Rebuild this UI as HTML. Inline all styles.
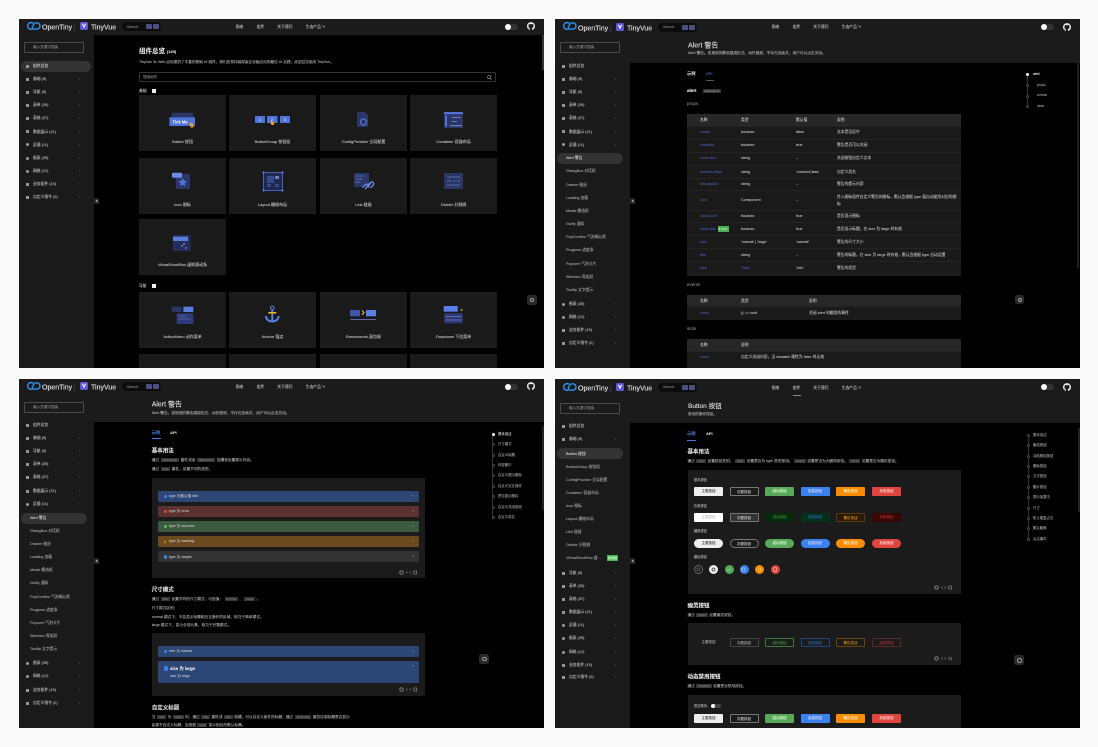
<!DOCTYPE html>
<html><head><meta charset="utf-8"><style>
html,body{margin:0;padding:0;background:#fafafa}
body{width:1098px;height:747px;overflow:hidden;position:relative;font-family:"Liberation Sans","Noto Sans CJK SC",sans-serif}
.f{position:absolute;width:525px;height:349px;background:#000;overflow:hidden;filter:blur(.35px)}
p{position:absolute;margin:0;line-height:0;white-space:nowrap;font-size:3.8px;color:#c4c4c4;-webkit-text-stroke:.07px currentColor}
i{position:absolute;display:block;font-style:normal;-webkit-text-stroke:.07px currentColor}
svg{position:absolute;overflow:visible}
.lg{transform:translateY(2.3px)}
.hd{left:0;top:0;width:525px;height:16px;background:#1b1b1b}
.sub{left:0;top:16px;width:525px;height:28px;background:#1b1b1b}
.sb{left:0;top:0;width:75px;height:349px;background:#1a1a1a}
.sch{left:5px;top:23px;width:58px;height:9px;border:.5px solid #4a4a4a;border-radius:1.5px}
.n{left:14px}
.n:before{content:"";position:absolute;left:-6.6px;top:-1.5px;width:3px;height:3px;background:#999;border-radius:.5px}
.o:before{border-radius:50%}
.n.a:after{content:"›";position:absolute;left:46px;top:0;color:#666;font-size:4px}
.u{left:11px;color:#a8a8a8}
.pill{background:#333;border-radius:6px;height:10.5px}
.cd{background:#1a1a1a;width:87px;height:56px}
.cl{color:#ccc;font-size:4px;transform:translateX(-50%)}
.ttl{font-size:7px;color:#e8e8e8;transform:translateY(1.7px)}
.sec{font-size:5.5px;color:#e8e8e8;font-weight:bold;left:132.7px;transform:translateY(.7px)}
.tx{left:132.7px;color:#b4b4b4;font-size:3.7px}
.k{background:#383838;color:#777;font-size:3px;padding:0 2px;margin:0 1.5px;border-radius:.5px}
.tr{left:132px;width:274px;background:#1a1a1a;border-top:.5px solid #242424}
.th{left:132px;width:274px;background:#272727}
.b{color:#4a5ab0;left:145px}
.c2{left:186px;color:#c4c4c4}
.c3{left:241px;color:#c4c4c4}
.c4{left:282px;color:#c4c4c4}
.box{background:#1b1b1b;border-radius:1px}
.al{left:139px;width:261px;height:11px;border-radius:1.5px}
.fb{width:9.5px;height:9.5px;background:#2a2a2a;border-radius:2.5px}
.fb:after{content:"";position:absolute;left:3px;top:3px;width:2.4px;height:2.4px;border:.6px solid #999;border-radius:50%}
.hn{width:5px;height:6px;background:#262626;border-radius:1px}
.hn:after{content:"";position:absolute;left:1.8px;top:2px;width:1.2px;height:1.2px;border-left:.5px solid #aaa;border-bottom:.5px solid #aaa;transform:rotate(45deg)}
.sc{background:#2a2a2a;width:2px}
.toc{font-size:3.4px;color:#a4a4a4}
.dt{width:1px;height:1px;border:.3px solid #444;border-radius:50%;background:#000}
.bt{width:29px;height:9px;border-radius:1px;font-size:3.5px;line-height:9px;text-align:center;box-sizing:border-box}
.ln{color:#b4b4b4;font-size:3.2px}
.w{background:#eee;color:#333}.s{border:.5px solid #777;color:#ccc}.gr{background:#5aa85a;color:#dfd}.bl{background:#3b82f0;color:#dde}.or{background:#fb8c00;color:#fed}.re{background:#e0443e;color:#fdd}
.r{border-radius:5px}
.cc{width:9px;height:9px;border-radius:50%}
.logo path{fill:none;stroke-width:1.3;stroke:#2f9cff}
</style></head><body>

<!-- FRAME 1 -->
<div class="f" style="left:19px;top:19px">
<i class="sb"></i><i class="hd"></i>
<svg class="logo" style="left:8px;top:3px" width="14" height="8" viewBox="0 0 14 8"><path d="M6.3 1.4A3.4 3.4 0 1 0 6.6 6.2"/><path d="M6.6 6.6C8 7.7 13 7.5 13 4S8.8.2 7.4 1.6 5.5 5 5 6"/></svg>
<p class="lg" style="left:23px;top:7px;font-size:7px;color:#eee">OpenTiny</p><p class="lg" style="left:55px;top:7px;font-size:6px;color:#555">|</p>
<svg style="left:61px;top:3px" width="8" height="8" viewBox="0 0 8 8"><rect width="8" height="8" rx="1.6" fill="#5e56d8"/><path d="M1.8 1.8L4 6.4 6.2 1.8H5L4 4 3 1.8z" fill="#fff"/></svg>
<p class="lg" style="left:72px;top:7px;font-size:7px;color:#eee">TinyVue</p>
<i style="left:103px;top:3px;width:39px;height:9px;background:#0c0c0c;border-radius:5px"></i>
<p style="left:108px;top:7.5px;font-size:3.6px;color:#888">Search</p>
<i style="left:127px;top:5px;width:5.5px;height:5px;background:#4b5080;border-radius:.8px"></i><i style="left:133.5px;top:5px;width:6.5px;height:5px;background:#4b5080;border-radius:.8px"></i>
<p style="left:216.7px;top:8px">指南</p><p style="left:237.7px;top:8px">组件</p><p style="left:258.3px;top:8px">关于我们</p><p style="left:286.7px;top:8px">生态产品 ∨</p>
<i style="left:486px;top:4.5px;width:13px;height:6px;background:#333;border-radius:3px"></i><i style="left:486px;top:4.5px;width:6px;height:6px;background:#fff;border-radius:50%"></i>
<svg style="left:508px;top:3px" width="8" height="8" viewBox="0 0 24 24"><path fill="#eee" d="M12 .5C5.37.5 0 5.87 0 12.5c0 5.3 3.438 9.8 8.205 11.385.6.11.82-.26.82-.577v-2.234c-3.338.726-4.033-1.415-4.033-1.415-.546-1.387-1.333-1.756-1.333-1.756-1.089-.745.083-.729.083-.729 1.205.084 1.84 1.237 1.84 1.237 1.07 1.834 2.807 1.304 3.492.997.108-.775.418-1.305.762-1.605-2.665-.305-5.467-1.334-5.467-5.93 0-1.31.468-2.38 1.236-3.22-.124-.303-.536-1.524.117-3.176 0 0 1.008-.322 3.3 1.23a11.5 11.5 0 0 1 6.003 0c2.29-1.552 3.297-1.23 3.297-1.23.655 1.652.243 2.873.119 3.176.77.84 1.235 1.91 1.235 3.22 0 4.61-2.807 5.62-5.48 5.92.43.37.815 1.102.815 2.222v3.293c0 .32.217.694.825.576C20.565 22.296 24 17.8 24 12.5 24 5.87 18.63.5 12 .5z"/></svg>
<i class="sch"></i><p style="left:14px;top:28px;color:#888;font-size:3.6px">输入关键字搜索</p>
<i class="pill" style="left:2px;top:42px;width:70px"></i>
<p class="n" style="top:47px;color:#ddd">组件总览</p><p class="n a" style="top:60px">基础 (9)</p><p class="n a" style="top:73px">导航 (9)</p><p class="n a" style="top:86px">表单 (26)</p><p class="n a" style="top:99px">表格 (37)</p><p class="n a" style="top:112.5px">数据展示 (21)</p><p class="n a o" style="top:125.5px">反馈 (11)</p><p class="n a o" style="top:139px">图表 (28)</p><p class="n a o" style="top:152px">网格 (12)</p><p class="n a" style="top:165px">业务组件 (15)</p><p class="n a" style="top:178px">自定义指令 (2)</p>
<i class="hn" style="left:75px;top:179px"></i>
<p style="left:120px;top:33px;font-size:6.5px;font-weight:bold;color:#e8e8e8">组件总览 <span style="font-size:4px">(129)</span></p>
<p style="left:120px;top:43px;font-size:3.65px;color:#b4b4b4">TinyVue 3x Web 应用提供了丰富的基础 UI 组件，我们还将持续探索企业级应用的最佳 UI 实践，欢迎尝试使用 TinyVue。</p>
<i style="left:120px;top:53px;width:357px;height:10px;box-sizing:border-box;border:.5px solid #333;border-radius:1px"></i>
<p style="left:124px;top:58px;font-size:3.6px;color:#888">搜索组件</p>
<svg style="left:468px;top:55.5px" width="5" height="5" viewBox="0 0 5 5"><circle cx="2.2" cy="2.2" r="1.6" fill="none" stroke="#aaa" stroke-width=".6"/><path d="M3.4 3.4L4.6 4.6" stroke="#aaa" stroke-width=".6"/></svg>
<p style="left:120px;top:72px;color:#ccc">基础</p><i style="left:133px;top:70.3px;width:3.6px;height:3.6px;background:#eee"></i>
<p style="left:120px;top:267px;color:#ccc">导航</p><i style="left:133px;top:265.3px;width:3.6px;height:3.6px;background:#eee"></i>
<i class="cd" style="left:120px;top:76px"></i><i class="cd" style="left:210px;top:76px"></i><i class="cd" style="left:301px;top:76px"></i><i class="cd" style="left:391px;top:76px"></i>
<i class="cd" style="left:120px;top:139px"></i><i class="cd" style="left:210px;top:139px"></i><i class="cd" style="left:301px;top:139px"></i><i class="cd" style="left:391px;top:139px"></i>
<i class="cd" style="left:120px;top:200px"></i>
<i class="cd" style="left:120px;top:273px"></i><i class="cd" style="left:210px;top:273px"></i><i class="cd" style="left:301px;top:273px"></i><i class="cd" style="left:391px;top:273px"></i>
<i class="cd" style="left:120px;top:335px"></i><i class="cd" style="left:210px;top:335px"></i><i class="cd" style="left:301px;top:335px"></i><i class="cd" style="left:391px;top:335px"></i>
<p class="cl" style="left:163.5px;top:122.7px">Button 按钮</p><p class="cl" style="left:253.5px;top:122.7px">ButtonGroup 按钮组</p><p class="cl" style="left:344.5px;top:122.7px">ConfigProvider 全局配置</p><p class="cl" style="left:434.5px;top:122.7px">Container 容器布局</p>
<p class="cl" style="left:163.5px;top:185.5px">Icon 图标</p><p class="cl" style="left:253.5px;top:185.5px">Layout 栅格布局</p><p class="cl" style="left:344.5px;top:185.5px">Link 链接</p><p class="cl" style="left:434.5px;top:185.5px">Divider 分割线</p>
<p class="cl" style="left:163.5px;top:245.5px">VirtualScrollBox 虚拟滚动条</p>
<p class="cl" style="left:163.5px;top:318.3px">ActionMenu 动作菜单</p><p class="cl" style="left:253.5px;top:318.3px">Anchor 锚点</p><p class="cl" style="left:344.5px;top:318.3px">Breadcrumb 面包屑</p><p class="cl" style="left:434.5px;top:318.3px">Dropdown 下拉菜单</p>
<svg style="left:0;top:0" width="525" height="349" viewBox="0 0 525 349">
<rect x="152.7" y="93.7" width="21.6" height="6" fill="#2b3566"/><rect x="150.3" y="98.3" width="25.7" height="8.7" fill="#4f74d9"/><text x="161" y="104.4" font-size="4.2" font-weight="bold" fill="#fff" text-anchor="middle" font-family="Liberation Sans">Tick Me</text><path d="M170 104.5c2-1.5 4-.5 4.5 2v2h-3v-2z" fill="#e8a020"/>
<rect x="236" y="97" width="10" height="7" fill="#4f74d9"/><rect x="248" y="97" width="10.5" height="7" fill="#4f74d9"/><rect x="261" y="97" width="10" height="7" fill="#4f74d9"/><text x="241" y="102" font-size="4" fill="#fff" text-anchor="middle" font-family="Liberation Sans">1</text><text x="253" y="102" font-size="4" fill="#fff" text-anchor="middle" font-family="Liberation Sans">2</text><text x="266" y="102" font-size="4" fill="#fff" text-anchor="middle" font-family="Liberation Sans">3</text><path d="M251 103c1.6-1.400 3.500-.8 4 1.200v1.800h-2.500z" fill="#e8a020"/>
<path d="M338 93h8l3 3v12h-11z" fill="#2b3566"/><circle cx="344.5" cy="103" r="3" fill="none" stroke="#4f74d9" stroke-width="1.3"/>
<rect x="425" y="93" width="19" height="16" fill="#2b3566"/><rect x="425" y="93" width="19" height="2.2" fill="#4f74d9"/><rect x="426" y="96.5" width="2" height="11" fill="#4f74d9"/><rect x="433" y="98" width="9" height="1" fill="#6a7fc0"/><rect x="433" y="102" width="5" height="1" fill="#6a7fc0"/><rect x="431" y="106" width="12" height="1.2" fill="#6a7fc0"/>
<rect x="156.7" y="155" width="14.3" height="15" rx="1" fill="#2b3566"/><rect x="153" y="153.7" width="10" height="5" rx=".8" fill="#6a8ce8"/><path d="M163.7 159l1.4 2.7 3 .4-2.2 2.1.5 3-2.7-1.4-2.700 1.400.5-3-2.200-2.100 3-.4z" fill="#4f74d9"/>
<rect x="244.5" y="153.5" width="19" height="18" fill="#1f2850" stroke="#4f74d9" stroke-width=".8"/><rect x="248" y="157" width="7" height="7" fill="#3a4a86"/><rect x="256" y="157" width="4" height="3" fill="#6a7fc0"/><rect x="248" y="165" width="4" height="3" fill="#3a4a86"/><rect x="256" y="165" width="4" height="3" fill="#3a4a86"/><circle cx="244.5" cy="153.5" r="1" fill="#6a8ce8"/><circle cx="263.5" cy="153.5" r="1" fill="#6a8ce8"/><circle cx="244.5" cy="171.5" r="1" fill="#6a8ce8"/><circle cx="263.5" cy="171.5" r="1" fill="#6a8ce8"/>
<rect x="335" y="154" width="15" height="14" fill="#2b3566"/><path d="M336.5 157h9M336.5 160h7M336.5 163h5" stroke="#6a7fc0" stroke-width=".8"/><path d="M346 170l6-6M343.5 168.500l3-3a2.200 2.200 0 0 1 3 3M349 166l3-3a2 2 0 0 1 2.500 2.800l-3 3" fill="none" stroke="#6a8ce8" stroke-width="1.3"/>
<rect x="425" y="154" width="19" height="16" fill="#2b3566"/><path d="M428 158h13M428 162h4M434 162h2M438 162h3M428 166h13" stroke="#6a7fc0" stroke-width=".8"/>
<rect x="154" y="216" width="17.7" height="16" fill="#242d5c"/><rect x="154" y="217.7" width="15" height="4.3" fill="#5a7de0"/><circle cx="163" cy="227" r="1" fill="#6a7fc0"/><circle cx="167" cy="229" r="1" fill="#6a7fc0"/><circle cx="165" cy="225" r="1" fill="#6a7fc0"/>
<rect x="152.7" y="287.7" width="10" height="5.3" fill="#2b3566"/><rect x="164.3" y="287.7" width="10" height="5.3" fill="#5a7de0"/><rect x="157.7" y="294.3" width="16.6" height="10.7" fill="#2f3a78"/><path d="M159.5 297h8M159.5 300h12" stroke="#5a6cb0" stroke-width=".7"/>
<circle cx="253.3" cy="289" r="1.8" fill="none" stroke="#5a7de0" stroke-width="1.1"/><path d="M253.3 291v11M247 297c0 3.500 3 5.500 6.300 5.500s6.300-2 6.300-5.500" fill="none" stroke="#5a7de0" stroke-width="2"/><rect x="249.3" y="293" width="8" height="1.5" fill="#e8c020"/>
<rect x="331" y="291" width="10" height="6.3" fill="#3e55a8"/><path d="M343 291.5l2 2.200-2 2.200" fill="none" stroke="#e8c020" stroke-width="1.1"/><rect x="347" y="291" width="10" height="6.3" fill="#5a80e8"/><rect x="331.5" y="300" width="25.5" height="1" fill="#5a6cb0"/>
<rect x="424.7" y="287" width="14" height="5.7" fill="#5a80e8"/><path d="M441 291.5l1.500-1.800 1.500 1.800z" fill="#e8c020"/><rect x="425.3" y="294.3" width="18.4" height="10" fill="#2f3a78"/><path d="M426.5 297.500h16M426.5 301h16" stroke="#5a6cb0" stroke-width=".9"/>
</svg>
<i class="sc" style="left:522.7px;top:16px;height:35px;background:#333"></i>
<i class="fb" style="left:508px;top:276px"></i>
</div>

<!-- FRAME 2 -->
<div class="f" style="left:555px;top:19px">
<i class="sb"></i><i class="hd"></i><i class="sub"></i>
<svg class="logo" style="left:8px;top:3px" width="14" height="8" viewBox="0 0 14 8"><path d="M6.3 1.4A3.4 3.4 0 1 0 6.6 6.2"/><path d="M6.6 6.6C8 7.7 13 7.5 13 4S8.8.2 7.4 1.6 5.5 5 5 6"/></svg>
<p class="lg" style="left:23px;top:7.5px;font-size:7px;color:#eee">OpenTiny</p><p class="lg" style="left:55px;top:7.5px;font-size:6px;color:#555">|</p>
<svg style="left:61px;top:3.5px" width="8" height="8" viewBox="0 0 8 8"><rect width="8" height="8" rx="1.6" fill="#5e56d8"/><path d="M1.8 1.8L4 6.4 6.2 1.8H5L4 4 3 1.8z" fill="#fff"/></svg>
<p class="lg" style="left:72px;top:7.5px;font-size:7px;color:#eee">TinyVue</p>
<i style="left:103px;top:3.5px;width:39px;height:9px;background:#0c0c0c;border-radius:5px"></i>
<p style="left:108px;top:8px;font-size:3.6px;color:#888">Search</p>
<i style="left:127px;top:5.5px;width:5.5px;height:5px;background:#4b5080;border-radius:.8px"></i><i style="left:133.5px;top:5.5px;width:6.5px;height:5px;background:#4b5080;border-radius:.8px"></i>
<p style="left:216.7px;top:8px">指南</p><p style="left:237.7px;top:8px">组件</p><p style="left:258.3px;top:8px">关于我们</p><p style="left:286.7px;top:8px">生态产品 ∨</p>
<i style="left:486px;top:5px;width:13px;height:6px;background:#333;border-radius:3px"></i><i style="left:486px;top:5px;width:6px;height:6px;background:#fff;border-radius:50%"></i>
<svg style="left:508px;top:3.5px" width="8" height="8" viewBox="0 0 24 24"><path fill="#eee" d="M12 .5C5.37.5 0 5.87 0 12.5c0 5.3 3.438 9.8 8.205 11.385.6.11.82-.26.82-.577v-2.234c-3.338.726-4.033-1.415-4.033-1.415-.546-1.387-1.333-1.756-1.333-1.756-1.089-.745.083-.729.083-.729 1.205.084 1.84 1.237 1.84 1.237 1.07 1.834 2.807 1.304 3.492.997.108-.775.418-1.305.762-1.605-2.665-.305-5.467-1.334-5.467-5.93 0-1.31.468-2.38 1.236-3.22-.124-.303-.536-1.524.117-3.176 0 0 1.008-.322 3.3 1.23a11.5 11.5 0 0 1 6.003 0c2.29-1.552 3.297-1.23 3.297-1.23.655 1.652.243 2.873.119 3.176.77.84 1.235 1.91 1.235 3.22 0 4.61-2.807 5.62-5.48 5.92.43.37.815 1.102.815 2.222v3.293c0 .32.217.694.825.576C20.565 22.296 24 17.8 24 12.5 24 5.87 18.63.5 12 .5z"/></svg>
<i class="sch"></i><p style="left:14px;top:28px;color:#888;font-size:3.6px">输入关键字搜索</p>
<p class="n" style="top:47px">组件总览</p><p class="n a" style="top:60px">基础 (9)</p><p class="n a" style="top:73px">导航 (9)</p><p class="n a" style="top:86px">表单 (26)</p><p class="n a" style="top:99px">表格 (37)</p><p class="n a" style="top:112.5px">数据展示 (21)</p><p class="n a o" style="top:125.5px">反馈 (11)</p>
<i class="pill" style="left:2px;top:134px;width:66px"></i>
<p class="u" style="top:139px;color:#ddd">Alert 警告</p><p class="u" style="top:152px">DialogBox 对话框</p><p class="u" style="top:165.7px">Drawer 抽屉</p><p class="u" style="top:179px">Loading 加载</p><p class="u" style="top:192px">Modal 模态框</p><p class="u" style="top:205px">Notify 通知</p><p class="u" style="top:218px">PopConfirm 气泡确认框</p><p class="u" style="top:231px">Progress 进度条</p><p class="u" style="top:245px">Popover 气泡卡片</p><p class="u" style="top:258px">Skeleton 骨架屏</p><p class="u" style="top:271px">Tooltip 文字提示</p>
<p class="n a o" style="top:285px">图表 (28)</p><p class="n a o" style="top:298px">网格 (12)</p><p class="n a" style="top:311px">业务组件 (15)</p><p class="n a" style="top:324px">自定义指令 (2)</p>
<i class="hn" style="left:75px;top:179px"></i>
<p class="ttl" style="left:133px;top:26px">Alert 警告</p>
<p style="left:133px;top:34px;font-size:3.7px;color:#b4b4b4">Alert 警告。表现现的静态展现形式、动作展现、不存在连续关、用户可以点击关闭。</p>
<p style="left:132px;top:54.7px;font-size:4.2px;font-weight:bold;color:#ddd">示例</p><p style="left:151px;top:54.7px;font-size:4px;color:#4f74d9">API</p><i style="left:151px;top:60.5px;width:8px;height:.6px;background:#555"></i>
<p style="left:132px;top:72px;font-size:4.5px;font-weight:bold;color:#eee">alert</p><p style="left:148px;top:72px;font-size:3px;color:#999;background:#333;padding:0 1.5px;line-height:4px;height:4px;margin-top:-2px">component</p>
<p style="left:132px;top:85px;font-size:4.5px;color:#888">props</p>
<i class="th" style="top:95px;height:12px"></i>
<i class="tr" style="top:107px;height:13px"></i><i class="tr" style="top:120px;height:13px"></i><i class="tr" style="top:133px;height:13px"></i><i class="tr" style="top:146px;height:13px"></i><i class="tr" style="top:159px;height:12px"></i><i class="tr" style="top:171px;height:20px"></i><i class="tr" style="top:191px;height:12px"></i><i class="tr" style="top:203px;height:13px"></i><i class="tr" style="top:216px;height:13px"></i><i class="tr" style="top:229px;height:13px"></i><i class="tr" style="top:242px;height:14px"></i>
<p class="c2" style="left:145px;top:100.7px;color:#ccc">名称</p><p class="c2" style="top:100.7px;color:#ccc">类型</p><p class="c3" style="top:100.7px;color:#ccc">默认值</p><p class="c4" style="top:100.7px;color:#ccc">说明</p>
<p class="b" style="top:112.7px">center</p><p class="c2" style="top:112.7px">boolean</p><p class="c3" style="top:112.7px">false</p><p class="c4" style="top:112.7px">文本是否居中</p>
<p class="b" style="top:126px">closable</p><p class="c2" style="top:126px">boolean</p><p class="c3" style="top:126px">true</p><p class="c4" style="top:126px">警告是否可以关闭</p>
<p class="b" style="top:139px">close-text</p><p class="c2" style="top:139px">string</p><p class="c3" style="top:139px">--</p><p class="c4" style="top:139px">关闭按钮自定义文本</p>
<p class="b" style="top:152.5px">custom-class</p><p class="c2" style="top:152.5px">string</p><p class="c3" style="top:152.5px">'customClass'</p><p class="c4" style="top:152.5px">自定义类名</p>
<p class="b" style="top:165px">description</p><p class="c2" style="top:165px">string</p><p class="c3" style="top:165px">--</p><p class="c4" style="top:165px">警告的提示内容</p>
<p class="b" style="top:181px">icon</p><p class="c2" style="top:181px">Component</p><p class="c3" style="top:181px">--</p><p class="c4" style="top:177.5px">传入图标组件自定义警告的图标，默认会根据 type 值自动使用对应的图</p><p class="c4" style="top:184.5px">标</p>
<p class="b" style="top:196.7px">show-icon</p><p class="c2" style="top:196.7px">boolean</p><p class="c3" style="top:196.7px">true</p><p class="c4" style="top:196.7px">是否显示图标</p>
<p class="b" style="top:209.7px">show-title</p><i style="left:162.7px;top:207.3px;width:11.3px;height:5.5px;background:#4caf50"></i><p style="left:163.5px;top:210px;font-size:3px;color:#dfd">3.21.0</p><p class="c2" style="top:209.7px">boolean</p><p class="c3" style="top:209.7px">true</p><p class="c4" style="top:209.7px">是否显示标题，在 size 为 large 时有效</p>
<p class="b" style="top:222.7px">size</p><p class="c2" style="top:222.7px">'normal' | 'large'</p><p class="c3" style="top:222.7px">'normal'</p><p class="c4" style="top:222.7px">警告的尺寸大小</p>
<p class="b" style="top:236px">title</p><p class="c2" style="top:236px">string</p><p class="c3" style="top:236px">--</p><p class="c4" style="top:236px">警告的标题，在 size 为 large 时有效，默认会根据 type 自动设置</p>
<p class="b" style="top:249px">type</p><p class="c2" style="top:249px;color:#4a5ab0">IType</p><p class="c3" style="top:249px">'info'</p><p class="c4" style="top:249px">警告的类型</p>
<p style="left:132px;top:266px;font-size:4.5px;color:#888">events</p>
<i class="th" style="top:276px;height:11px"></i><i class="tr" style="top:287px;height:13px"></i>
<p style="left:145px;top:282px;color:#ccc">名称</p><p class="c2" style="top:282px;color:#ccc">类型</p><p style="left:254px;top:282px;color:#ccc">说明</p>
<p class="b" style="top:293.5px">close</p><p class="c2" style="top:293.5px">() => void</p><p style="left:254px;top:293.5px">关闭 alert 时触发的事件</p>
<p style="left:132px;top:310px;font-size:4.5px;color:#888">slots</p>
<i class="th" style="top:320px;height:12px"></i><i class="tr" style="top:332px;height:17px"></i>
<p style="left:145px;top:326px;color:#ccc">名称</p><p class="c2" style="top:326px;color:#ccc">说明</p>
<p class="b" style="top:338px">close</p><p class="c2" style="top:338px">自定义关闭内容，当 closable 属性为 false 时无效</p>
<i style="left:472px;top:56px;width:.4px;height:32px;background:#333"></i>
<i class="dt" style="left:471.3px;top:54px;background:#fff;border-color:#fff"></i><i class="dt" style="left:471.3px;top:65px"></i><i class="dt" style="left:471.3px;top:75.5px"></i><i class="dt" style="left:471.3px;top:85.5px"></i>
<p class="toc" style="left:478px;top:55px;color:#eee">alert</p><p class="toc" style="left:482px;top:66px">props</p><p class="toc" style="left:482px;top:76px">events</p><p class="toc" style="left:482px;top:86.5px">slots</p>
<i class="sc" style="left:522px;top:44px;height:205px;background:#1f1f1f"></i>
<i class="fb" style="left:459.5px;top:275.5px"></i>
</div>

<!-- FRAME 3 -->
<div class="f" style="left:19px;top:379px">
<i class="sb"></i><i class="hd"></i><i class="sub" style="height:27px"></i>
<svg class="logo" style="left:8px;top:3px" width="14" height="8" viewBox="0 0 14 8"><path d="M6.3 1.4A3.4 3.4 0 1 0 6.6 6.2"/><path d="M6.6 6.6C8 7.7 13 7.5 13 4S8.8.2 7.4 1.6 5.5 5 5 6"/></svg>
<p class="lg" style="left:23px;top:7px;font-size:7px;color:#eee">OpenTiny</p><p class="lg" style="left:55px;top:7px;font-size:6px;color:#555">|</p>
<svg style="left:61px;top:3px" width="8" height="8" viewBox="0 0 8 8"><rect width="8" height="8" rx="1.6" fill="#5e56d8"/><path d="M1.8 1.8L4 6.4 6.2 1.8H5L4 4 3 1.8z" fill="#fff"/></svg>
<p class="lg" style="left:72px;top:7px;font-size:7px;color:#eee">TinyVue</p>
<i style="left:103px;top:3px;width:39px;height:9px;background:#0c0c0c;border-radius:5px"></i>
<p style="left:108px;top:7.5px;font-size:3.6px;color:#888">Search</p>
<i style="left:127px;top:5px;width:5.5px;height:5px;background:#4b5080;border-radius:.8px"></i><i style="left:133.5px;top:5px;width:6.5px;height:5px;background:#4b5080;border-radius:.8px"></i>
<p style="left:216.7px;top:7.5px">指南</p><p style="left:237.7px;top:7.5px">组件</p><p style="left:258.3px;top:7.5px">关于我们</p><p style="left:286.7px;top:7.5px">生态产品 ∨</p>
<i style="left:486px;top:4.5px;width:13px;height:6px;background:#333;border-radius:3px"></i><i style="left:486px;top:4.5px;width:6px;height:6px;background:#fff;border-radius:50%"></i>
<svg style="left:508px;top:3px" width="8" height="8" viewBox="0 0 24 24"><path fill="#eee" d="M12 .5C5.37.5 0 5.87 0 12.5c0 5.3 3.438 9.8 8.205 11.385.6.11.82-.26.82-.577v-2.234c-3.338.726-4.033-1.415-4.033-1.415-.546-1.387-1.333-1.756-1.333-1.756-1.089-.745.083-.729.083-.729 1.205.084 1.84 1.237 1.84 1.237 1.07 1.834 2.807 1.304 3.492.997.108-.775.418-1.305.762-1.605-2.665-.305-5.467-1.334-5.467-5.93 0-1.31.468-2.38 1.236-3.22-.124-.303-.536-1.524.117-3.176 0 0 1.008-.322 3.3 1.23a11.5 11.5 0 0 1 6.003 0c2.29-1.552 3.297-1.23 3.297-1.23.655 1.652.243 2.873.119 3.176.77.84 1.235 1.91 1.235 3.22 0 4.61-2.807 5.62-5.48 5.92.43.37.815 1.102.815 2.222v3.293c0 .32.217.694.825.576C20.565 22.296 24 17.8 24 12.5 24 5.87 18.63.5 12 .5z"/></svg>
<i class="sch"></i><p style="left:14px;top:28px;color:#888;font-size:3.6px">输入关键字搜索</p>
<p class="n" style="top:46px">组件总览</p><p class="n a" style="top:59px">基础 (9)</p><p class="n a" style="top:72px">导航 (9)</p><p class="n a" style="top:85px">表单 (26)</p><p class="n a" style="top:98px">表格 (37)</p><p class="n a" style="top:112px">数据展示 (21)</p><p class="n a o" style="top:125px">反馈 (11)</p>
<i class="pill" style="left:2px;top:134px;width:66px"></i>
<p class="u" style="top:139px;color:#ddd">Alert 警告</p><p class="u" style="top:152px">DialogBox 对话框</p><p class="u" style="top:165px">Drawer 抽屉</p><p class="u" style="top:178px">Loading 加载</p><p class="u" style="top:191px">Modal 模态框</p><p class="u" style="top:204px">Notify 通知</p><p class="u" style="top:218px">PopConfirm 气泡确认框</p><p class="u" style="top:231px">Progress 进度条</p><p class="u" style="top:244px">Popover 气泡卡片</p><p class="u" style="top:257px">Skeleton 骨架屏</p><p class="u" style="top:270px">Tooltip 文字提示</p>
<p class="n a o" style="top:284px">图表 (28)</p><p class="n a o" style="top:297px">网格 (12)</p><p class="n a" style="top:311px">业务组件 (15)</p><p class="n a" style="top:324px">自定义指令 (2)</p>
<i class="hn" style="left:75px;top:179px"></i>
<p class="ttl" style="left:132.7px;top:25px">Alert 警告</p>
<p style="left:132.7px;top:33.7px;font-size:3.7px;color:#b4b4b4">Alert 警告。表现现的静态展现形式、动作展现、不存在连续关、用户可以点击关闭。</p>
<p style="left:132.7px;top:54px;font-size:4.2px;font-weight:bold;color:#4f74d9">示例</p><i style="left:132.7px;top:58.5px;width:9px;height:.7px;background:#4f74d9"></i><p style="left:151px;top:54px;font-size:4px;font-weight:bold;color:#ddd">API</p>
<p class="sec" style="top:72px">基本用法</p>
<p class="tx" style="top:81px">通过<span class="k">description</span>属性或者<span class="k">description</span>插槽来设置提示内容。</p>
<p class="tx" style="top:90px">通过<span class="k">type</span>属性，设置不同的类型。</p>
<i class="box" style="left:132.7px;top:98.7px;width:273.3px;height:100.3px"></i>
<i class="al" style="top:111.7px;background:#2c4676"></i><i class="al" style="top:126.7px;background:#5c3230"></i><i class="al" style="top:141.7px;background:#3c5a40"></i><i class="al" style="top:156.7px;background:#6c4a20"></i><i class="al" style="top:172px;background:#333"></i>
<i class="cc" style="left:144.5px;top:115.5px;width:3.5px;height:3.5px;background:#3b82f0"></i><i class="cc" style="left:144.5px;top:130.5px;width:3.5px;height:3.5px;background:#e0443e"></i><i class="cc" style="left:144.5px;top:145.5px;width:3.5px;height:3.5px;background:#5cb85c"></i><i style="left:144.5px;top:160.5px;width:0;height:0;border-left:1.8px solid transparent;border-right:1.8px solid transparent;border-bottom:3.5px solid #fb8c00"></i><i class="cc" style="left:144.5px;top:176px;width:3.5px;height:3.5px;background:#3b82f0"></i>
<p style="left:150px;top:117.2px;font-size:3.6px">type 为默认值 info</p><p style="left:150px;top:132.2px;font-size:3.6px">type 为 error</p><p style="left:150px;top:147.2px;font-size:3.6px">type 为 success</p><p style="left:150px;top:162.2px;font-size:3.6px">type 为 warning</p><p style="left:150px;top:177.5px;font-size:3.6px">type 为 simple</p>
<p style="left:393px;top:116.5px;color:#888">×</p><p style="left:393px;top:131.5px;color:#888">×</p><p style="left:393px;top:146.5px;color:#888">×</p><p style="left:393px;top:161.5px;color:#888">×</p><p style="left:393px;top:177px;color:#888">×</p>
<svg style="left:379.5px;top:190.5px" width="18" height="5" viewBox="0 0 18 5"><circle cx="2.5" cy="2.5" r="1.7" fill="none" stroke="#aaa" stroke-width=".7"/><path d="M8.5 1.5L7.3 2.5 8.5 3.5M10.5 1.5L11.7 2.5 10.5 3.5" fill="none" stroke="#aaa" stroke-width=".5"/><rect x="14.7" y="1" width="3" height="3" fill="none" stroke="#aaa" stroke-width=".5"/></svg>
<p class="sec" style="top:211px">尺寸模式</p>
<p class="tx" style="top:220.3px">通过<span class="k">size</span>设置不同的尺寸模式，可选值：<span class="k">normal</span>、<span class="k">large</span>。</p>
<p class="tx" style="top:229px">尺寸模式区别：</p>
<p class="tx" style="top:237.7px">normal 模式下，不会显示标题和交互操作的区域，相当于简单模式。</p>
<p class="tx" style="top:246px">large 模式下，显示全部元素，相当于完整模式。</p>
<i class="box" style="left:132.7px;top:253.7px;width:273.3px;height:63px"></i>
<i class="al" style="top:266.7px;background:#2c4676"></i><i class="al" style="top:282px;height:22px;background:#2c4676"></i>
<i class="cc" style="left:144.5px;top:270.5px;width:3.5px;height:3.5px;background:#3b82f0"></i><i class="cc" style="left:144.5px;top:287px;width:4.5px;height:4.5px;background:#3b82f0"></i>
<p style="left:150px;top:272.2px;font-size:3.6px">size 为 normal</p><p style="left:151px;top:289.5px;font-size:4.3px;font-weight:bold;color:#eee">size 为 large</p><p style="left:151px;top:296.7px;font-size:3.6px">size 为 large</p>
<p style="left:393px;top:272px;color:#888">×</p><p style="left:393px;top:287px;color:#888">×</p>
<svg style="left:379.5px;top:308.2px" width="18" height="5" viewBox="0 0 18 5"><circle cx="2.5" cy="2.5" r="1.7" fill="none" stroke="#aaa" stroke-width=".7"/><path d="M8.5 1.5L7.3 2.5 8.5 3.5M10.5 1.5L11.7 2.5 10.5 3.5" fill="none" stroke="#aaa" stroke-width=".5"/><rect x="14.7" y="1" width="3" height="3" fill="none" stroke="#aaa" stroke-width=".5"/></svg>
<p class="sec" style="top:328.7px">自定义标题</p>
<p class="tx" style="top:337.7px">当<span class="k">size</span>为<span class="k">large</span>时，通过<span class="k">title</span>属性或<span class="k">title</span>插槽，可以自定义组件的标题，通过<span class="k">show-title</span>属性控制标题是否显示</p>
<p class="tx" style="top:346px">如果不自定义标题，会根据<span class="k">type</span>显示相应的默认标题。</p>
<i style="left:473.4px;top:56px;width:.4px;height:84px;background:#333"></i>
<i class="dt" style="left:472.6px;top:53.8px;background:#fff;border-color:#fff"></i><i class="dt" style="left:472.6px;top:64.2px"></i><i class="dt" style="left:472.6px;top:74.6px"></i><i class="dt" style="left:472.6px;top:85px"></i><i class="dt" style="left:472.6px;top:95.4px"></i><i class="dt" style="left:472.6px;top:105.8px"></i><i class="dt" style="left:472.6px;top:116.2px"></i><i class="dt" style="left:472.6px;top:126.6px"></i><i class="dt" style="left:472.6px;top:137px"></i>
<p class="toc" style="left:479px;top:54.7px;color:#ddd">基本用法</p><p class="toc" style="left:479px;top:65.1px">尺寸模式</p><p class="toc" style="left:479px;top:75.5px">自定义标题</p><p class="toc" style="left:479px;top:85.9px">内容图中</p><p class="toc" style="left:479px;top:96.3px">自定义提示图标</p><p class="toc" style="left:479px;top:106.7px">自定义交互操作</p><p class="toc" style="left:479px;top:117.1px">是否显示图标</p><p class="toc" style="left:479px;top:127.5px">自定义关闭按钮</p><p class="toc" style="left:479px;top:137.9px">自定义类名</p>
<i class="sc" style="left:522.5px;top:47px;height:84px;background:#222"></i>
<i class="fb" style="left:460.3px;top:275px"></i>
</div>

<!-- FRAME 4 -->
<div class="f" style="left:555px;top:379px">
<i class="sb"></i><i class="hd"></i><i class="sub"></i>
<svg class="logo" style="left:8px;top:4px" width="14" height="8" viewBox="0 0 14 8"><path d="M6.3 1.4A3.4 3.4 0 1 0 6.6 6.2"/><path d="M6.6 6.6C8 7.7 13 7.5 13 4S8.8.2 7.4 1.6 5.5 5 5 6"/></svg>
<p class="lg" style="left:23px;top:8px;font-size:7px;color:#eee">OpenTiny</p><p class="lg" style="left:55px;top:8px;font-size:6px;color:#555">|</p>
<svg style="left:61px;top:4px" width="8" height="8" viewBox="0 0 8 8"><rect width="8" height="8" rx="1.6" fill="#5e56d8"/><path d="M1.8 1.8L4 6.4 6.2 1.8H5L4 4 3 1.8z" fill="#fff"/></svg>
<p class="lg" style="left:72px;top:8px;font-size:7px;color:#eee">TinyVue</p>
<i style="left:103px;top:3.5px;width:39px;height:9px;background:#0c0c0c;border-radius:5px"></i>
<p style="left:108px;top:8px;font-size:3.6px;color:#888">Search</p>
<i style="left:127px;top:5.5px;width:5.5px;height:5px;background:#4b5080;border-radius:.8px"></i><i style="left:133.5px;top:5.5px;width:6.5px;height:5px;background:#4b5080;border-radius:.8px"></i>
<p style="left:216.7px;top:8.5px">指南</p><p style="left:237.7px;top:8.5px">组件</p><i style="left:237.7px;top:16.3px;width:8px;height:.5px;background:#888"></i><p style="left:258.3px;top:8.5px">关于我们</p><p style="left:286.7px;top:8.5px">生态产品 ∨</p>
<i style="left:486px;top:5px;width:13px;height:6px;background:#333;border-radius:3px"></i><i style="left:486px;top:5px;width:6px;height:6px;background:#fff;border-radius:50%"></i>
<svg style="left:508px;top:4px" width="8" height="8" viewBox="0 0 24 24"><path fill="#eee" d="M12 .5C5.37.5 0 5.87 0 12.5c0 5.3 3.438 9.8 8.205 11.385.6.11.82-.26.82-.577v-2.234c-3.338.726-4.033-1.415-4.033-1.415-.546-1.387-1.333-1.756-1.333-1.756-1.089-.745.083-.729.083-.729 1.205.084 1.84 1.237 1.84 1.237 1.07 1.834 2.807 1.304 3.492.997.108-.775.418-1.305.762-1.605-2.665-.305-5.467-1.334-5.467-5.93 0-1.31.468-2.38 1.236-3.22-.124-.303-.536-1.524.117-3.176 0 0 1.008-.322 3.3 1.23a11.5 11.5 0 0 1 6.003 0c2.29-1.552 3.297-1.23 3.297-1.23.655 1.652.243 2.873.119 3.176.77.84 1.235 1.91 1.235 3.22 0 4.61-2.807 5.62-5.48 5.92.43.37.815 1.102.815 2.222v3.293c0 .32.217.694.825.576C20.565 22.296 24 17.8 24 12.5 24 5.87 18.63.5 12 .5z"/></svg>
<i class="sch" style="top:24px"></i><p style="left:14px;top:29px;color:#888;font-size:3.6px">输入关键字搜索</p>
<p class="n" style="top:47px">组件总览</p><p class="n a" style="top:60px">基础 (9)</p>
<i class="pill" style="left:2px;top:69px;width:66px"></i>
<p class="u" style="top:74.7px;color:#ddd">Button 按钮</p><p class="u" style="top:88px">ButtonGroup 按钮组</p><p class="u" style="top:101px">ConfigProvider 全局配置</p><p class="u" style="top:114px">Container 容器布局</p><p class="u" style="top:127px">Icon 图标</p><p class="u" style="top:140px">Layout 栅格布局</p><p class="u" style="top:153px">Link 链接</p><p class="u" style="top:166px">Divider 分割线</p><p class="u" style="top:179px">VirtualScrollBox 虚…</p>
<i style="left:51.7px;top:176.3px;width:11.3px;height:5.4px;background:#4caf50"></i><p style="left:53px;top:179px;font-size:3px;color:#dfd">新增组</p>
<p class="n a" style="top:194px">导航 (9)</p><p class="n a" style="top:207px">表单 (26)</p><p class="n a" style="top:220px">表格 (37)</p><p class="n a" style="top:233px">数据展示 (21)</p><p class="n a o" style="top:246px">反馈 (11)</p><p class="n a o" style="top:259px">图表 (28)</p><p class="n a o" style="top:273px">网格 (12)</p><p class="n a" style="top:286px">业务组件 (15)</p><p class="n a" style="top:298px">自定义指令 (2)</p>
<i class="hn" style="left:75px;top:179px"></i>
<p style="left:133px;top:28px;font-size:6.5px;color:#e8e8e8">Button 按钮</p>
<p style="left:133px;top:34.5px;font-size:3.6px;color:#b4b4b4">常用的操作按钮。</p>
<p style="left:132px;top:54.7px;font-size:4.2px;font-weight:bold;color:#4f74d9">示例</p><i style="left:132px;top:60.5px;width:9px;height:.7px;background:#4f74d9"></i><p style="left:151px;top:54.7px;font-size:4px;font-weight:bold;color:#ddd">API</p>
<p class="sec" style="left:132.5px;top:73px">基本用法</p>
<p class="tx" style="left:132.5px;top:82px">通过<span class="k">type</span>设置按钮类型。<span class="k">plain</span>设置是否为 type 类型按钮。<span class="k">round</span>设置是否为大圆角按钮。<span class="k">circle</span>设置是否为圆形按钮。</p>
<i class="box" style="left:132.7px;top:91px;width:273.3px;height:124px"></i>
<p class="ln" style="left:139px;top:101px">基本按钮</p>
<i class="bt w" style="left:139px;top:108px">主要按钮</i><i class="bt s" style="left:174.5px;top:108px">次要按钮</i><i class="bt gr" style="left:210px;top:108px">成功按钮</i><i class="bt bl" style="left:245.5px;top:108px">信息按钮</i><i class="bt or" style="left:281px;top:108px">警告按钮</i><i class="bt re" style="left:317px;top:108px">危险按钮</i>
<p class="ln" style="left:139px;top:126.7px">朴素按钮</p>
<i class="bt" style="left:139px;top:134px;background:#fff;color:#bbb">主要按钮</i><i class="bt s" style="left:174.5px;top:134px;background:#333">次要按钮</i><i class="bt" style="left:210px;top:134px;background:#062a0a;color:#3a8a3a">成功按钮</i><i class="bt" style="left:245.5px;top:134px;background:#05301a;color:#2a6ab0">信息按钮</i><i class="bt" style="left:281px;top:134px;background:#2a1a05;border:.5px solid #5a3a10;color:#e08a10">警告按钮</i><i class="bt" style="left:317px;top:134px;background:#3a0505;color:#b03030">危险按钮</i>
<p class="ln" style="left:139px;top:152px">圆角按钮</p>
<i class="bt w r" style="left:139px;top:159.7px">主要按钮</i><i class="bt s r" style="left:174.5px;top:159.7px">次要按钮</i><i class="bt gr r" style="left:210px;top:159.7px">成功按钮</i><i class="bt bl r" style="left:245.5px;top:159.7px">信息按钮</i><i class="bt or r" style="left:281px;top:159.7px">警告按钮</i><i class="bt re r" style="left:317px;top:159.7px">危险按钮</i>
<p class="ln" style="left:139px;top:178px">图标按钮</p>
<i class="cc" style="left:139.2px;top:185.5px;border:.5px solid #666;box-sizing:border-box"></i><i class="cc" style="left:154.2px;top:185.5px;background:#eee"></i><i class="cc" style="left:169.5px;top:185.5px;background:#5aa85a"></i><i class="cc" style="left:184.5px;top:185.5px;background:#3b82f0"></i><i class="cc" style="left:200.2px;top:185.5px;background:#fb8c00"></i><i class="cc" style="left:215.5px;top:185.5px;background:#e0443e"></i>
<svg style="left:139.2px;top:185.5px" width="90" height="9" viewBox="0 0 90 9"><circle cx="4.3" cy="4.3" r="1.5" fill="none" stroke="#999" stroke-width=".5"/><circle cx="19.5" cy="4.5" r="1.5" fill="none" stroke="#333" stroke-width=".7"/><path d="M33 4.5l1.2 1.2 2.2-2.4" fill="none" stroke="#dfd" stroke-width=".5"/><rect x="47.5" y="3" width="3.5" height="3" fill="none" stroke="#dde" stroke-width=".5"/><circle cx="65.5" cy="4.5" r="1.6" fill="none" stroke="#fed" stroke-width=".5"/><rect x="79.500" y="2.8" width="2.8" height="3.5" fill="none" stroke="#fdd" stroke-width=".5"/></svg>
<svg style="left:379.2px;top:206.2px" width="18" height="5" viewBox="0 0 18 5"><circle cx="2.5" cy="2.5" r="1.7" fill="none" stroke="#aaa" stroke-width=".7"/><path d="M8.5 1.5L7.3 2.5 8.5 3.5M10.5 1.5L11.7 2.5 10.5 3.5" fill="none" stroke="#aaa" stroke-width=".5"/><rect x="14.7" y="1" width="3" height="3" fill="none" stroke="#aaa" stroke-width=".5"/></svg>
<p class="sec" style="left:132.5px;top:227px">幽灵按钮</p>
<p class="tx" style="left:132.5px;top:236px">通过<span class="k">ghost</span>设置幽灵按钮。</p>
<i class="box" style="left:132.7px;top:244px;width:273.3px;height:42px"></i>
<i class="bt" style="left:139px;top:258.7px;color:#aaa">主要按钮</i><i class="bt" style="left:174.5px;top:258.7px;border:.5px solid #444;color:#aaa">次要按钮</i><i class="bt" style="left:210px;top:258.7px;border:.5px solid #3a7a3a;color:#3a9a3a">成功按钮</i><i class="bt" style="left:245.5px;top:258.7px;border:.5px solid #24467e;color:#2a6ab0">信息按钮</i><i class="bt" style="left:281px;top:258.7px;border:.5px solid #6a4510;color:#d08010">警告按钮</i><i class="bt" style="left:317px;top:258.7px;border:.5px solid #5a2a2a;color:#b03030">危险按钮</i>
<svg style="left:379.2px;top:277.2px" width="18" height="5" viewBox="0 0 18 5"><circle cx="2.5" cy="2.5" r="1.7" fill="none" stroke="#aaa" stroke-width=".7"/><path d="M8.5 1.5L7.3 2.5 8.5 3.5M10.5 1.5L11.7 2.5 10.5 3.5" fill="none" stroke="#aaa" stroke-width=".5"/><circle cx="16.2" cy="2.5" r="1.5" fill="none" stroke="#aaa" stroke-width=".5"/></svg>
<p class="sec" style="left:132.5px;top:297.7px">动态禁用按钮</p>
<p class="tx" style="left:132.5px;top:306.7px">通过<span class="k">disabled</span>设置是否禁用按钮。</p>
<i class="box" style="left:132.7px;top:316px;width:273.3px;height:33px"></i>
<p class="ln" style="left:139px;top:326.7px">是否禁用：</p>
<i style="left:155.7px;top:324.5px;width:10.5px;height:4.8px;background:#444;border-radius:3px"></i><i style="left:155.7px;top:324.5px;width:4.8px;height:4.8px;background:#fff;border-radius:50%"></i>
<i class="bt w" style="left:139px;top:335px">主要按钮</i><i class="bt s" style="left:174.5px;top:335px">次要按钮</i><i class="bt gr" style="left:210px;top:335px">成功按钮</i><i class="bt bl" style="left:245.5px;top:335px">信息按钮</i><i class="bt or" style="left:281px;top:335px">警告按钮</i><i class="bt re" style="left:317px;top:335px">危险按钮</i>
<i style="left:472.8px;top:56px;width:.4px;height:104px;background:#333"></i>
<i class="dt" style="left:472px;top:54.8px"></i><i class="dt" style="left:472px;top:65.2px"></i><i class="dt" style="left:472px;top:75.6px"></i><i class="dt" style="left:472px;top:86px"></i><i class="dt" style="left:472px;top:96.4px"></i><i class="dt" style="left:472px;top:106.8px"></i><i class="dt" style="left:472px;top:117.2px"></i><i class="dt" style="left:472px;top:127.6px"></i><i class="dt" style="left:472px;top:138px"></i><i class="dt" style="left:472px;top:148.4px"></i><i class="dt" style="left:472px;top:158.8px"></i>
<p class="toc" style="left:478px;top:55.7px">基本用法</p><p class="toc" style="left:478px;top:66.1px">幽灵按钮</p><p class="toc" style="left:478px;top:76.5px">动态禁用按钮</p><p class="toc" style="left:478px;top:86.9px">图标按钮</p><p class="toc" style="left:478px;top:97.3px">文字按钮</p><p class="toc" style="left:478px;top:107.7px">图片按钮</p><p class="toc" style="left:478px;top:118.1px">提示加载中</p><p class="toc" style="left:478px;top:128.5px">尺寸</p><p class="toc" style="left:478px;top:138.9px">防止重复点击</p><p class="toc" style="left:478px;top:149.3px">默认聚焦</p><p class="toc" style="left:478px;top:159.7px">点击事件</p>
<i class="sc" style="left:522.5px;top:49px;height:84px;background:#222"></i>
<i class="fb" style="left:459.3px;top:276.3px"></i>
</div>
</body></html>
